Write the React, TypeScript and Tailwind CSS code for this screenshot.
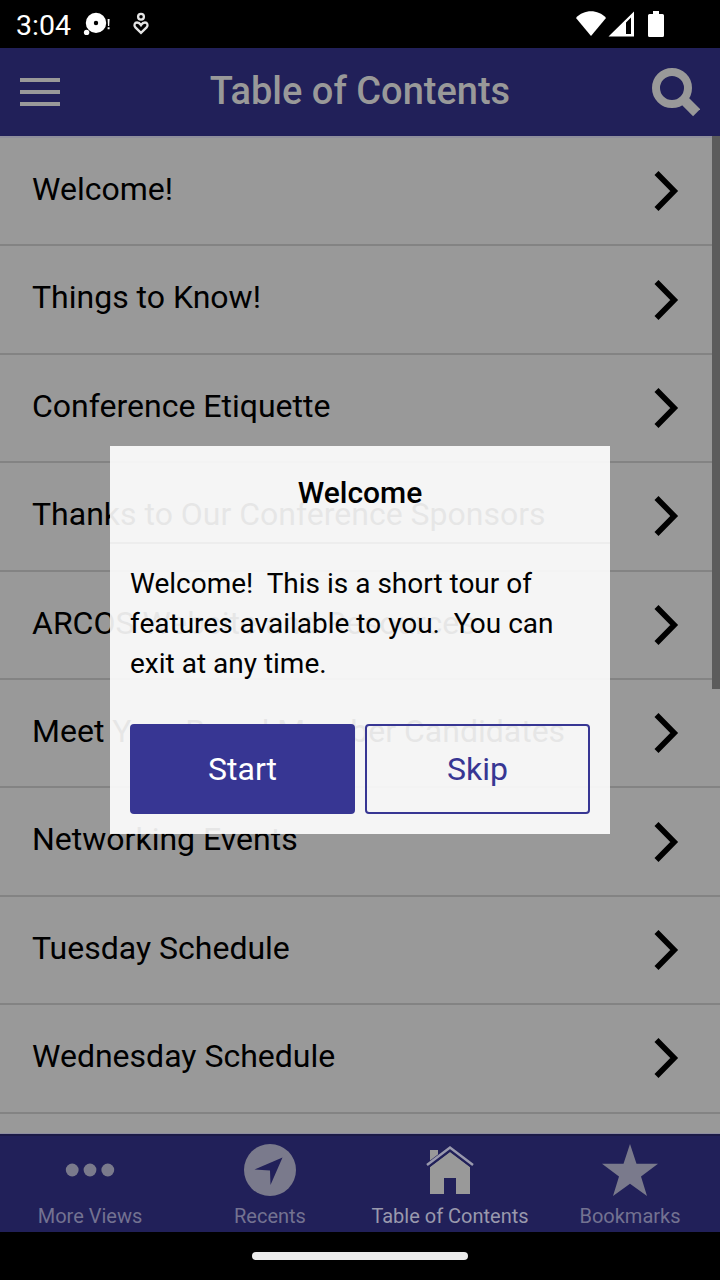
import type { ReactNode } from "react";

const items = [
  "Welcome!",
  "Things to Know!",
  "Conference Etiquette",
  "Thanks to Our Conference Sponsors",
  "ARCOS Website and Resources",
  "Meet Your Board Member Candidates",
  "Networking Events",
  "Tuesday Schedule",
  "Wednesday Schedule",
];

const StatusBar = () => {
  return (
    <div className="h-12 shrink-0 bg-black flex items-center justify-between pl-4 pr-[55px] text-white">
      <div className="flex items-center">
        <p className="text-[28.5px] leading-8 w-[56px] whitespace-nowrap pt-[3px]">3:04</p>
        <svg className="ml-[11px]" width="28" height="28" viewBox="83 10 28 28" fill="#fff">
          <path
            fillRule="evenodd"
            d="M96 12.7a10.2 10.2 0 1 0 0 20.4a10.2 10.2 0 1 0 0-20.4zm0 8.1a2.2 2.2 0 1 1 0 4.4a2.2 2.2 0 1 1 0-4.4z"
          />
          <circle cx="86.6" cy="32.4" r="2.7" />
          <path d="M107.6 19h2l-.4 7h-1.2zM107.6 27.3h2v2h-2z" />
        </svg>
        <svg
          className="ml-[21px]"
          width="18"
          height="24"
          viewBox="132 12 18 24"
          fill="none"
          stroke="#e5e5e5"
          strokeWidth="2.3"
        >
          <circle cx="141" cy="16.8" r="2.9" />
          <path d="M141 32.8l-5.6-5.4c-2-2.2-.6-4.9 1.6-4.9 1.8 0 3 1 4 2.6 1-1.6 2.2-2.6 4-2.6 2.2 0 3.6 2.7 1.6 4.9z" />
        </svg>
      </div>
      <svg width="90" height="28" viewBox="575 10 90 28" fill="#fff">
        <path d="M576 17.9C584 9 598 9 606 17.9L591 36.1z" />
        <path fillRule="evenodd" d="M608.5 36.6L634 11.5V36.6zM626 22.5V34h5V17.5z" />
        <path d="M653 11h6v3h3.5q1.5 0 1.5 1.5v20q0 1.5-1.5 1.5h-13q-1.5 0-1.5-1.5v-20q0-1.5 1.5-1.5h3.5z" />
      </svg>
    </div>
  );
};

const Header = () => {
  return (
    <header className="h-[88px] shrink-0 bg-[#212059] flex items-center justify-between px-5 text-[#999999]">
      <button aria-label="Menu" className="w-12 flex flex-col gap-2">
        <span className="w-10 h-1 bg-[#999999]" />
        <span className="w-10 h-1 bg-[#999999]" />
        <span className="w-10 h-1 bg-[#999999]" />
      </button>
      <h1 className="text-[38px] leading-[44px] font-medium whitespace-nowrap -mt-0.5">
        Table of Contents
      </h1>
      <button aria-label="Search">
        <svg width="48" height="50" viewBox="652 67 48 50" fill="none" stroke="#999999">
          <circle cx="672" cy="88" r="16" strokeWidth="8" />
          <path d="M682.5 98.5L696.6 112.6" strokeWidth="10" />
        </svg>
      </button>
    </header>
  );
};

const ContentsList = () => {
  return (
    <main className="relative flex-1 min-h-0 overflow-hidden bg-[#999999] border-b border-[#8d8da0]">
      <ul className="border-t-2 border-[#8f8f9c]">
        {items.map((item) => (
          <li
            key={item}
            className="h-[108.4px] pl-8 pr-10 flex items-center justify-between border-b-2 border-[#838383]"
          >
            <span className="text-[32px] leading-[40px] text-black whitespace-nowrap -mt-[4.4px]">
              {item}
            </span>
            <svg
              width="26"
              height="42"
              viewBox="0 0 26 42"
              fill="none"
              stroke="#000"
              strokeWidth="5.6"
            >
              <path d="M2.5 3L20.2 21L2.5 39" />
            </svg>
          </li>
        ))}
      </ul>
      <div className="absolute top-0 right-0 w-2 h-[553px] bg-[#5c5c5c]" />
    </main>
  );
};

const Tab = ({ label, active, children }: { label: string; active?: boolean; children: ReactNode }) => {
  return (
    <button
      className={
        active
          ? "w-[180px] flex flex-col items-center text-[#9999ad]"
          : "w-[180px] flex flex-col items-center text-[#737291]"
      }
    >
      <svg className="mt-1.5" width="60" height="60" viewBox="0 0 60 60">
        {children}
      </svg>
      <span className="text-xl leading-6 mt-0.5 whitespace-nowrap">{label}</span>
    </button>
  );
};

const TabBar = () => {
  return (
    <nav className="h-[98px] shrink-0 bg-[#212059] border-t-2 border-[#1b1a47] flex items-start">
      <Tab label="More Views">
        <g fill="#7a7a8c">
          <circle cx="12.2" cy="28" r="6.4" />
          <circle cx="30" cy="28" r="6.4" />
          <circle cx="47.8" cy="28" r="6.4" />
        </g>
      </Tab>
      <Tab label="Recents">
        <circle cx="30" cy="28" r="26" fill="#7a7a8c" />
        <path d="M42.5 15.5L14.5 27.5L30 28.5L30.5 43z" fill="#212059" />
      </Tab>
      <Tab label="Table of Contents" active>
        <path d="M10 8h8v7L10 21zM30 10L50 25V52H36V36H24V52H10V25z" fill="#999999" />
        <path d="M7 24L30 6.5L53 24" fill="none" stroke="#212059" strokeWidth="5" />
        <path d="M7 23L30 5.5L53 23" fill="none" stroke="#9999ad" strokeWidth="2.5" />
      </Tab>
      <Tab label="Bookmarks">
        <path
          d="M30 2L36.5 21.8H58L41 34.5L47 54L30 41.8L13 54L19 34.5L2 21.8H23.5z"
          fill="#7a7a8c"
        />
      </Tab>
    </nav>
  );
};

const WelcomeDialog = () => {
  return (
    <div
      role="dialog"
      className="absolute left-[110px] top-[446px] w-[500px] h-[388px] bg-white/90 text-black"
    >
      <div className="h-[98px] border-b-2 border-black/[0.03] flex items-center justify-center">
        <h2 className="text-[30px] leading-9 font-medium -mt-0.5">Welcome</h2>
      </div>
      <p className="px-5 pt-5 text-[28px] leading-10 whitespace-pre">
        {"Welcome!  This is a short tour of\nfeatures available to you.  You can\nexit at any time."}
      </p>
      <div className="px-5 mt-10 grid grid-cols-2 gap-2.5 text-[32px]">
        <button className="h-[90px] rounded bg-[#373693] text-white">Start</button>
        <button className="h-[90px] rounded border-2 border-[#373693] text-[#373693]">
          Skip
        </button>
      </div>
    </div>
  );
};

export default function App() {
  return (
    <div className="relative w-[720px] h-[1280px] overflow-hidden flex flex-col bg-black font-['Roboto',sans-serif]">
      <StatusBar />
      <Header />
      <ContentsList />
      <TabBar />
      <div className="h-12 shrink-0 flex items-center justify-center">
        <div className="w-[216px] h-2 rounded-full bg-[#ebebeb]" />
      </div>
      <WelcomeDialog />
    </div>
  );
}
